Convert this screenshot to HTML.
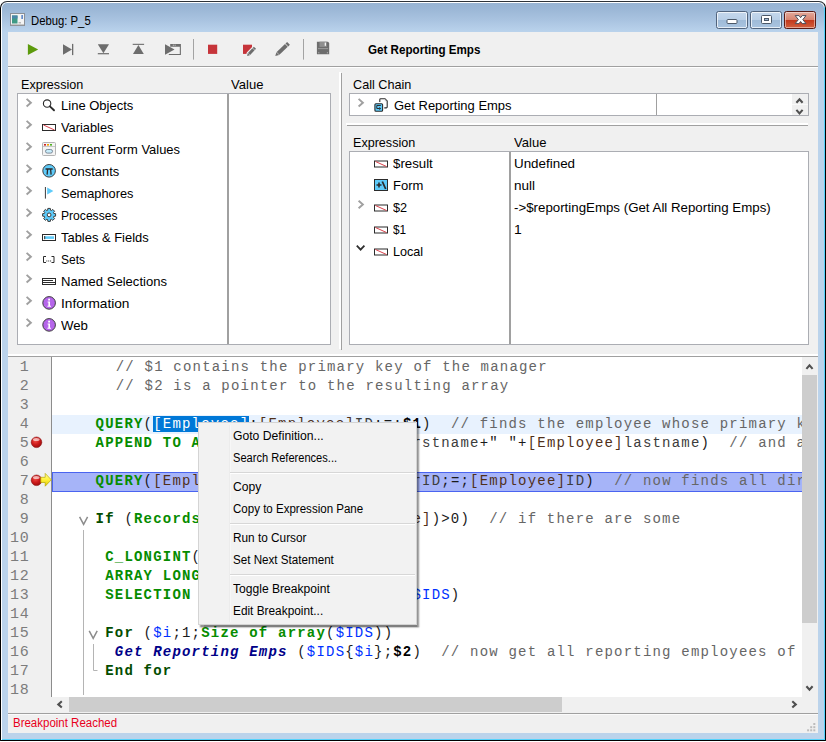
<!DOCTYPE html>
<html><head><meta charset="utf-8"><title>Debug: P_5</title>
<style>
html,body{margin:0;padding:0;background:#fff;}
body{width:826px;height:742px;overflow:hidden;position:relative;font-family:"Liberation Sans",sans-serif;}
*{box-sizing:border-box;}
.abs{position:absolute;}
#win{position:absolute;left:0;top:1px;width:826px;height:740px;border:1px solid #000;border-top-color:#2e3338;border-radius:7px 7px 1px 1px;
 background:linear-gradient(#98b4d2 0px,#9ab6d5 6px,#a9c3e0 18px,#bad3ec 30px,#bbd3eb 31px);box-shadow:inset 0 0 0 1px #fff;overflow:hidden;}
#client{position:absolute;left:7px;top:30px;width:810px;height:701px;background:#f0f0f0;overflow:hidden;}
/* client coords: page x-8, page y-32 */
.tx{position:absolute;white-space:nowrap;transform-origin:0 50%;display:inline-block;}
.box{position:absolute;background:#fff;border:1px solid #abadb3;}
.vline{position:absolute;width:1px;background:#a0a0a0;}
.hline{position:absolute;height:1px;background:#a0a0a0;}
.chev{position:absolute;width:7px;height:9px;}
/* code */
#gutter{position:absolute;left:0;top:325px;width:44px;height:340px;background:#f0f0f0;border-right:1px solid #8c8c8c;}
#code{position:absolute;left:44px;top:325px;width:750px;height:340px;background:#fff;overflow:hidden;font-family:"Liberation Mono",monospace;font-size:16px;}
.ln{position:absolute;left:0;width:21.3px;text-align:right;font-family:"Liberation Mono",monospace;font-size:15px;letter-spacing:.6px;line-height:19px;color:#7c7c7c;height:19px;}
.cl{position:absolute;white-space:pre;line-height:19px;height:19px;color:#1a1a1a;font-size:14px;letter-spacing:1.2px;}
.c{color:#666}.k{color:#068c00;font-weight:bold}.kw{color:#034d00;font-weight:bold}.f{color:#3c3c3c}.tb{color:#50301a}.v{color:#0031ff}
.pa{font-weight:bold;color:#000}.m{color:#000088;font-weight:bold;font-style:italic}.sel{background:#0078d7;color:#fff}
.cb{width:32px;height:18px;border:1px solid #51647d;border-radius:2.5px;background:linear-gradient(#c5d8ec 0%,#b9cfe7 48%,#9fbbd8 52%,#a9c4e0 100%);box-shadow:inset 0 0 0 1px rgba(255,255,255,.7);}
.cbx{border-color:#5a1a14;background:linear-gradient(#e3aa9c 0%,#d88470 48%,#c2381c 52%,#d2603f 100%);box-shadow:inset 0 0 0 1px rgba(255,255,255,.45);}
</style></head><body>
<div id="win">
 <!-- title bar icon -->
 <svg class="abs" style="left:9px;top:11px" width="16" height="14" viewBox="0 0 16 14">
  <rect x="0.5" y="0.5" width="14" height="12" fill="#f4f4f4" stroke="#8a8f96"/>
  <rect x="0.5" y="11.5" width="14" height="1" fill="#9a9a9a" stroke="none"/>
  <rect x="2" y="2.5" width="5.5" height="8" fill="#3f9a86"/>
  <rect x="2" y="2.5" width="5.5" height="3" fill="#4a86a8"/>
  <rect x="11.5" y="2" width="1.2" height="4" fill="#2a62b8"/>
  <rect x="8.5" y="9" width="2.5" height="1.5" fill="#b8b8b8"/>
 </svg>
 <!-- caption buttons -->
 <div class="abs cb" style="left:715px;top:9px;"></div>
 <div class="abs cb" style="left:749px;top:9px;"></div>
 <div class="abs cb cbx" style="left:783px;top:9px;"></div>
 <svg class="abs" style="left:715px;top:9px" width="101" height="18" viewBox="0 0 101 18">
  <rect x="11" y="8.5" width="10" height="4" rx="1" fill="#fff" stroke="#4b5868" stroke-width="1"/>
  <rect x="45.5" y="4.5" width="10" height="8" rx="1" fill="#fff" stroke="#4b5868" stroke-width="1"/>
  <rect x="48.5" y="7.5" width="4" height="2" fill="#9db6d3" stroke="#4b5868" stroke-width="1"/>
  <path d="M79.2 4.6 L83 4.6 L84.6 6.7 L86.2 4.6 L90 4.6 L86.8 8.6 L90 12.6 L86.2 12.6 L84.6 10.500 L83 12.6 L79.2 12.6 L82.4 8.6 Z" fill="#fff" stroke="#4a4f5c" stroke-width="1" stroke-linejoin="round"/>
 </svg>
 <div class="abs" style="left:823px;top:5px;width:1px;height:733px;background:#55d2fb"></div><div class="abs" style="left:1px;top:737px;width:823px;height:1px;background:#55d2fb"></div>
 <div id="client">
  <!-- toolbar -->
  <div class="hline" style="left:0;top:34px;width:810px;background:#a0a0a0"></div>
  <div class="hline" style="left:0;top:35px;width:810px;background:#fff"></div>
<!--TOOLBAR-->
  <!-- left panel -->
  <div class="box" style="left:9px;top:61px;width:314px;height:252px;"></div>
  <div class="vline" style="left:219px;top:62px;height:250px;background:#a0a0a0;width:1.5px"></div>
  <!-- vertical separator -->
  <div class="vline" style="left:331px;top:40px;height:277px;background:#fff;width:2px"></div>
  <div class="vline" style="left:333px;top:41px;height:277px;background:#a0a0a0"></div>
  <!-- call chain box -->
  <div class="box" style="left:341px;top:61px;width:460px;height:23px;"></div>
  <div class="vline" style="left:648px;top:62px;height:21px;background:#a0a0a0"></div>
  <div class="abs" style="left:784px;top:62px;width:16px;height:21px;background:#f0f0f0"></div>
  <svg class="abs" style="left:784px;top:62px" width="16" height="21" viewBox="0 0 16 21"><path d="M4.4 8.8 L7.5 5.3 L10.6 8.8 M4.4 15.9 L7.5 19.4 L10.6 15.9" fill="none" stroke="#505050" stroke-width="2.1"/><rect x="0" y="10" width="16" height="1" fill="#fafafa"/></svg>
  <div class="hline" style="left:338px;top:91px;width:462px;background:#fff;height:2px"></div>
  <div class="hline" style="left:339px;top:93px;width:461px;background:#a0a0a0"></div>
  <!-- table box -->
  <div class="box" style="left:341px;top:119px;width:460px;height:194px;"></div>
  <div class="vline" style="left:501px;top:120px;height:192px;background:#a0a0a0;width:1.5px"></div>
  <!--ICONS-->
  <!-- splitter -->
  <div class="hline" style="left:0;top:322px;width:810px;background:#fff;height:2px"></div>
  <div class="hline" style="left:0;top:324px;width:810px;background:#a0a0a0"></div>
  <!-- code area -->
  <div id="gutter">
<div class="ln" style="top:1px">1</div>
<div class="ln" style="top:20px">2</div>
<div class="ln" style="top:39px">3</div>
<div class="ln" style="top:58px">4</div>
<div class="ln" style="top:77px">5</div>
<div class="ln" style="top:96px">6</div>
<div class="ln" style="top:115px">7</div>
<div class="ln" style="top:134px">8</div>
<div class="ln" style="top:153px">9</div>
<div class="ln" style="top:172px">10</div>
<div class="ln" style="top:191px">11</div>
<div class="ln" style="top:210px">12</div>
<div class="ln" style="top:229px">13</div>
<div class="ln" style="top:248px">14</div>
<div class="ln" style="top:267px">15</div>
<div class="ln" style="top:286px">16</div>
<div class="ln" style="top:305px">17</div>
<div class="ln" style="top:324px">18</div>
  </div>
  <div id="code">
   <div class="abs" style="left:0;top:58px;width:750px;height:19px;background:#e8f2fe"></div>
   <div class="abs" style="left:0;top:115px;width:750px;height:20px;background:#a6b4f8;border:1px solid #4a64f0;border-right:none"></div>
   <div class="cl" style="top:1px;left:63.76px"><span class="c">// $1 contains the primary key of the manager</span></div>
<div class="cl" style="top:20px;left:63.76px"><span class="c">// $2 is a pointer to the resulting array</span></div>
<div class="cl" style="top:58px;left:43.60px"><span class="k">QUERY</span><span class="p">(</span><span class="sel">[Employee]</span><span class="p">;</span><span class="tb">[Employee]</span><span class="f">ID</span><span class="p">;=;</span><span class="pa">$1</span><span class="p">)  </span><span class="c">// finds the employee whose primary key is $1</span></div>
<div class="cl" style="top:77px;left:43.60px"><span class="k">APPEND TO ARRAY</span><span class="p">(</span><span class="pa">$2</span><span class="p">-&gt;;</span><span class="tb">[Employee]</span><span class="f">firstname</span><span class="p">+&quot; &quot;+</span><span class="tb">[Employee]</span><span class="f">lastname</span><span class="p">)  </span><span class="c">// and adds it to the array</span></div>
<div class="cl" style="top:115px;left:43.60px"><span class="k">QUERY</span><span class="p">(</span><span class="tb">[Employee]</span><span class="p">;</span><span class="tb">[Employee]</span><span class="f">managerID</span><span class="p">;=;</span><span class="tb">[Employee]</span><span class="f">ID</span><span class="p">)  </span><span class="c">// now finds all direct reports</span></div>
<div class="cl" style="top:153px;left:43.60px"><span class="kw">If</span><span class="p"> (</span><span class="k">Records in selection</span><span class="p">(</span><span class="tb">[Employee]</span><span class="p">)&gt;0)  </span><span class="c">// if there are some</span></div>
<div class="cl" style="top:191px;left:53.20px"><span class="k">C_LONGINT</span><span class="p">(</span><span class="v">$i</span><span class="p">)</span></div>
<div class="cl" style="top:210px;left:53.20px"><span class="k">ARRAY LONGINT</span><span class="p">(</span><span class="v">$IDS</span><span class="p">;0)</span></div>
<div class="cl" style="top:229px;left:53.20px"><span class="k">SELECTION TO ARRAY</span><span class="p">(</span><span class="tb">[Employee]</span><span class="f">ID</span><span class="p">;</span><span class="v">$IDS</span><span class="p">)</span></div>
<div class="cl" style="top:267px;left:53.20px"><span class="kw">For</span><span class="p"> (</span><span class="v">$i</span><span class="p">;1;</span><span class="k">Size of array</span><span class="p">(</span><span class="v">$IDS</span><span class="p">))</span></div>
<div class="cl" style="top:286px;left:62.80px"><span class="m">Get Reporting Emps</span><span class="p"> (</span><span class="v">$IDS</span><span class="p">{</span><span class="v">$i</span><span class="p">};</span><span class="pa">$2</span><span class="p">)  </span><span class="c">// now get all reporting employees of this one</span></div>
<div class="cl" style="top:305px;left:53.20px"><span class="kw">End for</span></div>
  </div>
  <!-- scrollbars -->
  <div class="abs" style="left:794px;top:325px;width:16px;height:340px;background:#f0f0f0"></div>
  <div class="abs" style="left:794px;top:343px;width:15px;height:248px;background:#cdcdcd"></div>
  <div class="abs" style="left:0;top:665px;width:810px;height:16px;background:#f0f0f0"></div>
  <div class="abs" style="left:61px;top:665px;width:493px;height:15px;background:#cdcdcd"></div>
  <svg class="abs" style="left:-8px;top:-32px" width="826" height="742" viewBox="0 0 826 742"><path d="M806.4 368.9 L809.5 365.4 L812.6 368.9 M806.4 686.2 L809.5 689.7 L812.6 686.2 M61.8 701.3 L58.3 704.4 L61.8 707.5 M792.3 701.3 L795.8 704.4 L792.3 707.5" fill="none" stroke="#505050" stroke-width="2.1"/></svg>
  <div class="hline" style="left:0;top:681px;width:810px;background:#a0a0a0"></div>
  <div class="hline" style="left:0;top:682px;width:810px;background:#fbfbfb"></div>
  <!-- grip -->
  <svg class="abs" style="left:798px;top:691px" width="11" height="11" viewBox="0 0 11 11" fill="#bcbcbc"><rect x="7.3" y="0" width="2" height="2"/><rect x="4.2" y="3.2" width="2" height="2"/><rect x="7.3" y="3.2" width="2" height="2"/><rect x="1.100" y="6.300" width="2" height="2"/><rect x="4.2" y="6.300" width="2" height="2"/><rect x="7.3" y="6.300" width="2" height="2"/></svg>
  <!-- context menu -->
  <div class="abs" id="menu" style="left:190px;top:390px;width:219px;height:203px;background:#f2f2f2;border:1px solid #d4d4d4;box-shadow:2px 2.5px 1.5px rgba(0,0,0,.5)">
   <div class="abs" style="left:30px;top:2px;width:1px;height:197px;background:#ececec"></div>
   <div class="abs" style="left:31px;top:2px;width:1px;height:197px;background:#f7f7f7"></div>
   <div class="abs" style="left:31px;top:49px;width:185px;height:1px;background:#d7d7d7"></div><div class="abs" style="left:31px;top:50px;width:185px;height:1px;background:#fff"></div>
   <div class="abs" style="left:31px;top:100px;width:185px;height:1px;background:#d7d7d7"></div><div class="abs" style="left:31px;top:101px;width:185px;height:1px;background:#fff"></div>
   <div class="abs" style="left:31px;top:151px;width:185px;height:1px;background:#d7d7d7"></div><div class="abs" style="left:31px;top:152px;width:185px;height:1px;background:#fff"></div>
  </div>
 </div>
<svg class="abs" style="left:-1px;top:-2px;pointer-events:none" width="826" height="742" viewBox="0 0 826 742"><defs><radialGradient id="rb" cx=".4" cy=".35" r=".7"><stop offset="0" stop-color="#f05048"/><stop offset=".5" stop-color="#d01c1c"/><stop offset="1" stop-color="#980c0c"/></radialGradient><linearGradient id="ya" x1="0" y1="0" x2="0" y2="1"><stop offset="0" stop-color="#ffff9a"/><stop offset=".5" stop-color="#fff23a"/><stop offset="1" stop-color="#e0c400"/></linearGradient></defs><path d="M27.9 43.9 L38.2 49.5 L27.9 55.1 Z" fill="#5c9a0c"/><path d="M63 44.2 L72 49.5 L63 54.8 Z" fill="#6d6d6d"/><rect x="72" y="43.9" width="1.3" height="11.2" fill="#6d6d6d"/><path d="M97.8 44.2 H109 L103.4 53.2 Z" fill="#6d6d6d"/><rect x="97.8" y="53.1" width="11.2" height="1.2" fill="#6d6d6d"/><rect x="132.7" y="43.8" width="11.4" height="1.1" fill="#6d6d6d"/><path d="M138.4 44.9 L143.8 53.9 H133 Z" fill="#6d6d6d"/><path d="M165 44.2 L174.5 49.5 L165 54.8 Z" fill="#6d6d6d"/><path d="M170.2 43.9 H180.9 V55 H168.8 V53.9 H179.8 V46.7 H170.2 Z" fill="#6d6d6d"/><rect x="172.8" y="44.7" width="1" height="1" fill="#d8d8d8"/><rect x="174.6" y="44.7" width="1" height="1" fill="#d8d8d8"/><rect x="193" y="39" width="1" height="20.600" fill="#a3a3a3"/><rect x="303" y="39" width="1" height="20.600" fill="#a3a3a3"/><rect x="208" y="44.7" width="9.2" height="9.2" fill="#c6343a"/><rect x="243" y="44.7" width="9" height="9.2" fill="#c6343a"/><path d="M246.76 56.36 L247.77 53.12 L253.85 46.73 L256.03 48.79 L249.94 55.19 Z" fill="#f0f0f0" stroke="#f0f0f0" stroke-width="2.2" stroke-linejoin="round"/><path d="M247.10 56.00 L247.77 53.12 L249.94 55.19 Z" fill="#6d6d6d"/><path d="M247.98 52.90 L252.37 48.28 L254.54 50.35 L250.15 54.97 Z" fill="#6d6d6d"/><path d="M252.72 47.92 L253.85 46.73 L256.03 48.79 L254.89 49.99 Z" fill="#6d6d6d"/><path d="M275.30 56.00 L276.38 52.21 L279.14 55.10 Z" fill="#6d6d6d"/><path d="M276.68 51.92 L285.01 43.97 L287.77 46.86 L279.44 54.81 Z" fill="#6d6d6d"/><path d="M285.51 43.49 L287.10 41.97 L289.87 44.86 L288.28 46.38 Z" fill="#6d6d6d"/><path d="M316.9 41.7 H328 L329.2 42.9 V54.2 H316.9 Z" fill="#6d6d6d"/><rect x="319.5" y="41.7" width="7.3" height="5.2" fill="#8f8f8f"/><rect x="324.7" y="42.600" width="1.3" height="3.2" fill="#f4f4f4"/><rect x="318" y="48.300" width="10.100" height=".8" fill="#a8a8a8"/><rect x="318.300" y="52.300" width="1" height="1" fill="#c0c0c0"/><rect x="326.900" y="52.300" width="1" height="1" fill="#c0c0c0"/><path d="M26.60 98.90 L30.90 102.70 L26.60 106.50" fill="none" stroke="#a0a0a0" stroke-width="1.9"/><path d="M26.60 120.90 L30.90 124.70 L26.60 128.50" fill="none" stroke="#a0a0a0" stroke-width="1.9"/><path d="M26.60 142.90 L30.90 146.70 L26.60 150.50" fill="none" stroke="#a0a0a0" stroke-width="1.9"/><path d="M26.60 164.90 L30.90 168.70 L26.60 172.50" fill="none" stroke="#a0a0a0" stroke-width="1.9"/><path d="M26.60 186.90 L30.90 190.70 L26.60 194.50" fill="none" stroke="#a0a0a0" stroke-width="1.9"/><path d="M26.60 208.90 L30.90 212.70 L26.60 216.50" fill="none" stroke="#a0a0a0" stroke-width="1.9"/><path d="M26.60 230.90 L30.90 234.70 L26.60 238.50" fill="none" stroke="#a0a0a0" stroke-width="1.9"/><path d="M26.60 252.90 L30.90 256.70 L26.60 260.50" fill="none" stroke="#a0a0a0" stroke-width="1.9"/><path d="M26.60 274.90 L30.90 278.70 L26.60 282.50" fill="none" stroke="#a0a0a0" stroke-width="1.9"/><path d="M26.60 296.90 L30.90 300.70 L26.60 304.50" fill="none" stroke="#a0a0a0" stroke-width="1.9"/><path d="M26.60 318.90 L30.90 322.70 L26.60 326.50" fill="none" stroke="#a0a0a0" stroke-width="1.9"/><path d="M358.60 98.90 L362.90 102.70 L358.60 106.50" fill="none" stroke="#a0a0a0" stroke-width="1.9"/><path d="M358.60 200.70 L362.90 204.50 L358.60 208.30" fill="none" stroke="#a0a0a0" stroke-width="1.9"/><path d="M356.80 245.60 L360.60 249.60 L364.40 245.60" fill="none" stroke="#303030" stroke-width="1.8"/><circle cx="47.1" cy="103.6" r="3.7" fill="none" stroke="#2b2b2b" stroke-width="1.1"/><path d="M49.9 106.4 L54 110.3" stroke="#2b2b2b" stroke-width="1.9" stroke-linecap="round"/><rect x="42.5" y="124.5" width="13" height="6" fill="#fff" stroke="#2b2b2b" stroke-width="1"/><path d="M43.5 125.0 L54.5 130.0" stroke="#d8404a" stroke-width="1" fill="none"/><rect x="42.5" y="142.5" width="13" height="13" rx="1" fill="#f4f4f4" stroke="#b4b4b4"/><rect x="43" y="146" width="12" height="1" fill="#c8c8c8"/><rect x="44" y="144" width="2" height="1.6" fill="#d02020"/><rect x="47" y="144" width="2" height="1.6" fill="#f0a000"/><rect x="50" y="144" width="2" height="1.6" fill="#50b020"/><rect x="45.5" y="149.5" width="7" height="3.6" rx="1.8" fill="#c8ecfa" stroke="#708090" stroke-width=".9"/><circle cx="49.1" cy="170.8" r="6.3" fill="#5ecbfa" stroke="#3c3c3c" stroke-width="1"/><path d="M45.5 169 h7.2 M47.6 169.2 L47.1 174.6 M50.6 169.2 L51.1 174.6" stroke="#2b2b2b" stroke-width="1.3" fill="none"/><rect x="44.9" y="187" width="1" height="11.6" fill="#3c3c3c"/><path d="M47.2 187.6 L53.4 191 L47.2 194.4 Z" fill="#5ecbfa"/><path d="M55.58 213.65 L55.58 216.15 L53.78 216.35 L53.43 217.19 L54.56 218.60 L52.80 220.36 L51.39 219.23 L50.55 219.58 L50.35 221.38 L47.85 221.38 L47.65 219.58 L46.81 219.23 L45.40 220.36 L43.64 218.60 L44.77 217.19 L44.42 216.35 L42.62 216.15 L42.62 213.65 L44.42 213.45 L44.77 212.61 L43.64 211.20 L45.40 209.44 L46.81 210.57 L47.65 210.22 L47.85 208.42 L50.35 208.42 L50.55 210.22 L51.39 210.57 L52.80 209.44 L54.56 211.20 L53.43 212.61 L53.78 213.45 Z" fill="#5ecbfa" stroke="#3c3c3c" stroke-width="1" stroke-linejoin="round"/><circle cx="49.1" cy="214.9" r="1.9" fill="#fff" stroke="#3c3c3c" stroke-width="1"/><rect x="42.5" y="234.5" width="13" height="6" fill="#fff" stroke="#2b2b2b"/><rect x="44.5" y="236.3" width="9.5" height="2.6" fill="#5ecbfa"/><rect x="44.2" y="236" width="1" height="3.2" fill="#2b2b2b"/><path d="M46 256.5 H43.5 V262.5 H46 M51.5 256.5 H54 V262.5 H51.5" fill="none" stroke="#2b2b2b" stroke-width="1"/><rect x="46.3" y="260.5" width="1" height="1" fill="#2b2b2b"/><rect x="48.2" y="260.5" width="1" height="1" fill="#2b2b2b"/><rect x="50.1" y="260.5" width="1" height="1" fill="#2b2b2b"/><rect x="42.5" y="278.5" width="13" height="6" fill="#fff" stroke="#2b2b2b"/><path d="M43 280.5 H53 M43 282.5 H55" stroke="#2b2b2b" stroke-width="1"/><circle cx="49.1" cy="302.9" r="6.3" fill="#b565ea" stroke="#3c3c3c" stroke-width="1"/><rect x="48.2" y="298.7" width="1.8" height="1.8" fill="#fff"/><path d="M47.6 301.5 h2.4 v4.2 h1 v1 h-3.6 v-1 h1 v-3.2 h-.8 z" fill="#fff"/><circle cx="49.1" cy="324.9" r="6.3" fill="#b565ea" stroke="#3c3c3c" stroke-width="1"/><rect x="48.2" y="320.7" width="1.8" height="1.8" fill="#fff"/><path d="M47.6 323.5 h2.4 v4.2 h1 v1 h-3.6 v-1 h1 v-3.2 h-.8 z" fill="#fff"/><path d="M379.8 102 V99.6 Q379.8 98.7 380.7 98.7 H385 L387.2 101 V107 Q387.2 107.9 386.3 107.9 H384.3" fill="none" stroke="#2b2b2b" stroke-width="1.1"/><path d="M384.8 99 V101.3 H387" fill="#c8c8c8" stroke="none"/><rect x="374.9" y="103.800" width="7.7" height="7.4" rx="1" fill="#5ecbfa" stroke="#2b2b2b" stroke-width="1.1"/><path d="M380.8 105.500 H376.800 V108.500 H379.500" fill="none" stroke="#2b2b2b" stroke-width="1"/><path d="M379.200 107 L381.200 108.500 L379.200 110 Z" fill="#2b2b2b"/><rect x="374.5" y="161.0" width="13" height="6" fill="#fff" stroke="#2b2b2b" stroke-width="1"/><path d="M375.5 161.5 L386.5 166.5" stroke="#d8404a" stroke-width="1" fill="none"/><rect x="374.5" y="205.0" width="13" height="6" fill="#fff" stroke="#2b2b2b" stroke-width="1"/><path d="M375.5 205.5 L386.5 210.5" stroke="#d8404a" stroke-width="1" fill="none"/><rect x="374.5" y="227.0" width="13" height="6" fill="#fff" stroke="#2b2b2b" stroke-width="1"/><path d="M375.5 227.5 L386.5 232.5" stroke="#d8404a" stroke-width="1" fill="none"/><rect x="374.5" y="249.0" width="13" height="6" fill="#fff" stroke="#2b2b2b" stroke-width="1"/><path d="M375.5 249.5 L386.5 254.5" stroke="#d8404a" stroke-width="1" fill="none"/><rect x="374.5" y="179.500" width="13" height="11" fill="#5ecbfa" stroke="#2b2b2b"/><path d="M376.5 185 h5 M379 182.500 v5" stroke="#2b2b2b" stroke-width="1.6" fill="none"/><path d="M382.3 181.5 L385.7 189" stroke="#2b2b2b" stroke-width="1.8"/><circle cx="36.5" cy="442.3" r="5.3" fill="url(#rb)" stroke="#8a1010" stroke-width=".6"/><ellipse cx="36.3" cy="439.6" rx="3.3" ry="1.5" fill="#fff" opacity=".62"/><circle cx="36.5" cy="480.3" r="5.3" fill="url(#rb)" stroke="#8a1010" stroke-width=".6"/><ellipse cx="36.3" cy="477.6" rx="3.3" ry="1.5" fill="#fff" opacity=".62"/><path d="M40.8 477.3 H45.2 V473.4 L51.3 479.8 L45.2 486.2 V482.5 H40.8 Z" fill="url(#ya)" stroke="#b8a800" stroke-width=".7" stroke-linejoin="round"/><path d="M79.6 516.9 L83.6 524.3 L87.6 516.9" fill="none" stroke="#8c8c8c" stroke-width="1.5"/><path d="M89.2 630.9 L93.2 638.3 L97.2 630.9" fill="none" stroke="#8c8c8c" stroke-width="1.5"/><rect x="83" y="530" width="1" height="165" fill="#b4b4b4"/><path d="M93.5 644 V670.500 H97.500" fill="none" stroke="#b4b4b4" stroke-width="1"/></svg>
 <div class="abs" id="texts" style="left:-1px;top:-2px;width:826px;height:742px;pointer-events:none">
<span id="t0" class="tx" style="left:30.50px;top:12.84px;font-size:12.00px;line-height:16px;font-weight:normal;color:#000;transform:scaleX(0.9413);">Debug: P_5</span>
<span id="t1" class="tx" style="left:367.60px;top:40.88px;font-size:13.33px;line-height:17px;font-weight:bold;color:#000;transform:scaleX(0.8721);">Get Reporting Emps</span>
<span id="t2" class="tx" style="left:20.80px;top:75.88px;font-size:13.33px;line-height:17px;font-weight:normal;color:#000;transform:scaleX(0.9439);">Expression</span>
<span id="t3" class="tx" style="left:230.50px;top:75.88px;font-size:13.33px;line-height:17px;font-weight:normal;color:#000;transform:scaleX(0.9788);">Value</span>
<span id="t4" class="tx" style="left:352.50px;top:75.88px;font-size:13.33px;line-height:17px;font-weight:normal;color:#000;transform:scaleX(0.9484);">Call Chain</span>
<span id="t5" class="tx" style="left:352.80px;top:133.88px;font-size:13.33px;line-height:17px;font-weight:normal;color:#000;transform:scaleX(0.9439);">Expression</span>
<span id="t6" class="tx" style="left:513.80px;top:133.88px;font-size:13.33px;line-height:17px;font-weight:normal;color:#000;transform:scaleX(0.9788);">Value</span>
<span id="t7" class="tx" style="left:60.80px;top:96.88px;font-size:13.33px;line-height:17px;font-weight:normal;color:#000;transform:scaleX(0.9770);">Line Objects</span>
<span id="t8" class="tx" style="left:60.80px;top:118.88px;font-size:13.33px;line-height:17px;font-weight:normal;color:#000;transform:scaleX(0.9600);">Variables</span>
<span id="t9" class="tx" style="left:60.80px;top:140.88px;font-size:13.33px;line-height:17px;font-weight:normal;color:#000;transform:scaleX(0.9699);">Current Form Values</span>
<span id="t10" class="tx" style="left:60.80px;top:162.88px;font-size:13.33px;line-height:17px;font-weight:normal;color:#000;transform:scaleX(0.9717);">Constants</span>
<span id="t11" class="tx" style="left:60.80px;top:184.88px;font-size:13.33px;line-height:17px;font-weight:normal;color:#000;transform:scaleX(0.9579);">Semaphores</span>
<span id="t12" class="tx" style="left:60.80px;top:206.88px;font-size:13.33px;line-height:17px;font-weight:normal;color:#000;transform:scaleX(0.9081);">Processes</span>
<span id="t13" class="tx" style="left:60.80px;top:228.88px;font-size:13.33px;line-height:17px;font-weight:normal;color:#000;transform:scaleX(0.9700);">Tables &amp; Fields</span>
<span id="t14" class="tx" style="left:60.80px;top:250.88px;font-size:13.33px;line-height:17px;font-weight:normal;color:#000;transform:scaleX(0.9000);">Sets</span>
<span id="t15" class="tx" style="left:60.80px;top:272.88px;font-size:13.33px;line-height:17px;font-weight:normal;color:#000;transform:scaleX(0.9796);">Named Selections</span>
<span id="t16" class="tx" style="left:60.80px;top:294.88px;font-size:13.33px;line-height:17px;font-weight:normal;color:#000;transform:scaleX(1.0269);">Information</span>
<span id="t17" class="tx" style="left:60.80px;top:316.88px;font-size:13.33px;line-height:17px;font-weight:normal;color:#000;transform:scaleX(0.9926);">Web</span>
<span id="t18" class="tx" style="left:393.50px;top:96.88px;font-size:13.33px;line-height:17px;font-weight:normal;color:#000;transform:scaleX(0.9736);">Get Reporting Emps</span>
<span id="t19" class="tx" style="left:393.00px;top:154.88px;font-size:13.33px;line-height:17px;font-weight:normal;color:#000;transform:scaleX(0.9950);">$result</span>
<span id="t20" class="tx" style="left:514.00px;top:154.88px;font-size:13.33px;line-height:17px;font-weight:normal;color:#000;transform:scaleX(1.0049);">Undefined</span>
<span id="t21" class="tx" style="left:393.00px;top:176.88px;font-size:13.33px;line-height:17px;font-weight:normal;color:#000;transform:scaleX(0.9774);">Form</span>
<span id="t22" class="tx" style="left:514.00px;top:176.88px;font-size:13.33px;line-height:17px;font-weight:normal;color:#000;transform:scaleX(1.0143);">null</span>
<span id="t23" class="tx" style="left:393.00px;top:198.88px;font-size:13.33px;line-height:17px;font-weight:normal;color:#000;transform:scaleX(0.9533);">$2</span>
<span id="t24" class="tx" style="left:514.00px;top:198.88px;font-size:13.33px;line-height:17px;font-weight:normal;color:#000;transform:scaleX(0.9973);">-&gt;$reportingEmps (Get All Reporting Emps)</span>
<span id="t25" class="tx" style="left:393.00px;top:220.88px;font-size:13.33px;line-height:17px;font-weight:normal;color:#000;transform:scaleX(0.8867);">$1</span>
<span id="t26" class="tx" style="left:514.00px;top:220.88px;font-size:13.33px;line-height:17px;font-weight:normal;color:#000;transform:scaleX(1.0429);">1</span>
<span id="t27" class="tx" style="left:393.00px;top:242.88px;font-size:13.33px;line-height:17px;font-weight:normal;color:#000;transform:scaleX(0.9469);">Local</span>
<span id="t28" class="tx" style="left:13.00px;top:714.84px;font-size:12.00px;line-height:16px;font-weight:normal;color:#e8001c;transform:scaleX(0.9569);">Breakpoint Reached</span>
<span id="t29" class="tx" style="left:232.80px;top:427.84px;font-size:12.00px;line-height:16px;font-weight:normal;color:#000;transform:scaleX(1.0146);">Goto Definition...</span>
<span id="t30" class="tx" style="left:232.80px;top:449.84px;font-size:12.00px;line-height:16px;font-weight:normal;color:#000;transform:scaleX(0.9230);">Search References...</span>
<span id="t31" class="tx" style="left:232.80px;top:478.84px;font-size:12.00px;line-height:16px;font-weight:normal;color:#000;transform:scaleX(1.0107);">Copy</span>
<span id="t32" class="tx" style="left:232.80px;top:500.84px;font-size:12.00px;line-height:16px;font-weight:normal;color:#000;transform:scaleX(0.9615);">Copy to Expression Pane</span>
<span id="t33" class="tx" style="left:232.80px;top:529.84px;font-size:12.00px;line-height:16px;font-weight:normal;color:#000;transform:scaleX(0.9840);">Run to Cursor</span>
<span id="t34" class="tx" style="left:232.80px;top:551.84px;font-size:12.00px;line-height:16px;font-weight:normal;color:#000;transform:scaleX(0.9692);">Set Next Statement</span>
<span id="t35" class="tx" style="left:232.80px;top:580.84px;font-size:12.00px;line-height:16px;font-weight:normal;color:#000;transform:scaleX(1.0083);">Toggle Breakpoint</span>
<span id="t36" class="tx" style="left:232.80px;top:602.84px;font-size:12.00px;line-height:16px;font-weight:normal;color:#000;transform:scaleX(0.9868);">Edit Breakpoint...</span>
 </div>
</div>
</body></html>
